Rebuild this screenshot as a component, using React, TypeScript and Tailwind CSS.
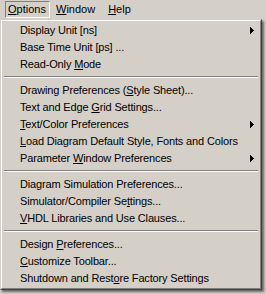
type Entry = { label: string; sub?: boolean } | "sep";

// "&" marks the accelerator letter, drawn underlined as in classic Windows menus.
const ITEMS: Entry[] = [
  { label: "Display Unit [ns]", sub: true },
  { label: "Base Time Unit [ps] ..." },
  { label: "Read-Only &Mode" },
  "sep",
  { label: "Drawing Preferences (&Style Sheet)..." },
  { label: "Text and Edge &Grid Settings..." },
  { label: "&Text/Color Preferences", sub: true },
  { label: "&Load Diagram Default Style, Fonts and Colors" },
  { label: "Parameter &Window Preferences", sub: true },
  "sep",
  { label: "Diagram Simulation Preferences..." },
  { label: "Simulator/Compiler Se&ttings..." },
  { label: "&VHDL Libraries and Use Clauses..." },
  "sep",
  { label: "Design &Preferences..." },
  { label: "&Customize Toolbar..." },
  { label: "Shutdown and Rest&ore Factory Settings" },
];

function Label({ text }: { text: string }) {
  const i = text.indexOf("&");
  if (i < 0) return <span>{text}</span>;
  return (
    <span>
      {text.slice(0, i)}
      <u className="underline-offset-[1px]">{text[i + 1]}</u>
      {text.slice(i + 2)}
    </span>
  );
}

function Arrow() {
  return (
    <svg width="4" height="7" viewBox="0 0 4 7" shapeRendering="crispEdges">
      <polygon points="0,0 4,3.5 0,7" fill="#000" />
    </svg>
  );
}

export default function App() {
  return (
    <div className="h-[294px] w-[266px] overflow-hidden bg-[#d4d0c8] font-['Liberation_Sans',Arial,sans-serif] text-[11px] text-black">
      {/* menu bar */}
      <div className="flex h-[19px] items-start">
        <div className="ml-[5px] mt-[1px] flex h-[17px] w-[45px] items-center border-b border-l border-r border-t border-b-white border-l-[#808080] border-r-white border-t-[#808080] pl-[2px]">
          <Label text="&Options" />
        </div>
        <div className="ml-[6px] flex h-[19px] items-center">
          <Label text="&Window" />
        </div>
        <div className="ml-[13px] flex h-[19px] items-center">
          <Label text="&Help" />
        </div>
      </div>

      {/* dropdown */}
      <div className="w-[262px] border border-b-[#404040] border-l-[#d4d0c8] border-r-[#404040] border-t-[#d4d0c8] shadow-[2px_2px_2px_rgba(0,0,0,0.5)]">
        <div className="border border-b-[#808080] border-l-white border-r-[#808080] border-t-white p-[1px] tracking-[-0.15px]">
          {ITEMS.map((it, i) =>
            it === "sep" ? (
              <div key={i} className="h-[9px] px-[1px] pt-[3px]">
                <div className="border-b border-t border-b-white border-t-[#808080]" />
              </div>
            ) : (
              <div key={i} className="flex h-[17px] items-center justify-between pl-[17px] pr-[5px] leading-none">
                <Label text={it.label} />
                {it.sub && <Arrow />}
              </div>
            )
          )}
        </div>
      </div>
    </div>
  );
}
